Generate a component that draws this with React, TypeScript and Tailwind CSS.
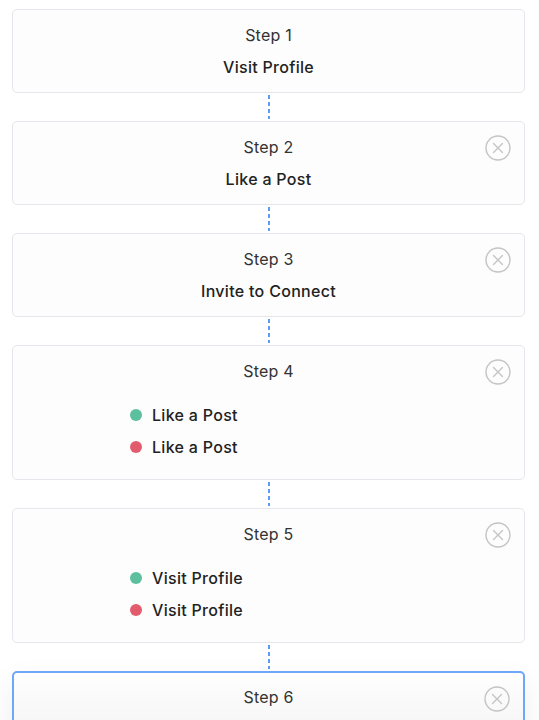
import React from 'react';

type Branch = { label: string; color: 'green' | 'red' };

interface Step {
  title?: string;
  branches?: Branch[];
  removable: boolean;
  active?: boolean;
}

const steps: Step[] = [
  { title: 'Visit Profile', removable: false },
  { title: 'Like a Post', removable: true },
  { title: 'Invite to Connect', removable: true },
  {
    removable: true,
    branches: [
      { label: 'Like a Post', color: 'green' },
      { label: 'Like a Post', color: 'red' },
    ],
  },
  {
    removable: true,
    branches: [
      { label: 'Visit Profile', color: 'green' },
      { label: 'Visit Profile', color: 'red' },
    ],
  },
  { removable: true, active: true },
];

const CloseIcon = () => (
  <svg width="26" height="26" viewBox="0 0 26 26" fill="none" stroke="#c4c4c4" strokeWidth="1.4">
    <circle cx="13" cy="13" r="12" />
    <path d="M8.5 8.5l9 9M17.5 8.5l-9 9" strokeLinecap="round" />
  </svg>
);

const Connector = () => (
  <div className="flex justify-center h-[28px] py-[2px]">
    <div className="w-[2px] h-full bg-[repeating-linear-gradient(to_bottom,#5b9cf6_0_4px,transparent_4px_7px)]" />
  </div>
);

export default function App() {
  return (
    <div
      className="min-h-[720px] bg-white pl-3 pr-[14px] pt-[9px]"
      style={{ fontFamily: 'Inter, "Noto Sans", sans-serif' }}
    >
      {steps.map((step, i) => (
        <React.Fragment key={i}>
          {i > 0 && <Connector />}
          <div
            className={
              'relative rounded-[5px] px-[13px] ' +
              (step.active
                ? 'border-2 border-[#6ea6f8] bg-gradient-to-b from-[#fefefe] to-[#f3f3f3] pt-[12px] pb-[40px] shadow-[0_12px_30px_rgba(0,0,0,0.07)]'
                : 'border border-[#e6e7ec] bg-[#fdfdfd] py-[13px]')
            }
          >
            {step.removable && (
              <button className="absolute top-[13px] right-[13px] w-[26px] h-[26px]">
                <CloseIcon />
              </button>
            )}
            <div className="text-center text-[16px] leading-6 text-[#333] tracking-[0.2px]">Step {i + 1}</div>
            {step.title && (
              <div className="mt-2 text-center text-[16px] leading-6 font-medium text-[#222] tracking-[0.3px]">
                {step.title}
              </div>
            )}
            {step.branches && (
              <div className="mt-5 mb-[7px] ml-[104px] flex flex-col gap-2">
                {step.branches.map((b, j) => (
                  <div key={j} className="flex items-center gap-[10px] h-6">
                    <span
                      className={
                        'w-3 h-3 rounded-full ' + (b.color === 'green' ? 'bg-[#5cbf9e]' : 'bg-[#e35c6e]')
                      }
                    />
                    <span className="text-[16px] font-medium text-[#222] tracking-[0.3px]">{b.label}</span>
                  </div>
                ))}
              </div>
            )}
          </div>
        </React.Fragment>
      ))}
    </div>
  );
}
